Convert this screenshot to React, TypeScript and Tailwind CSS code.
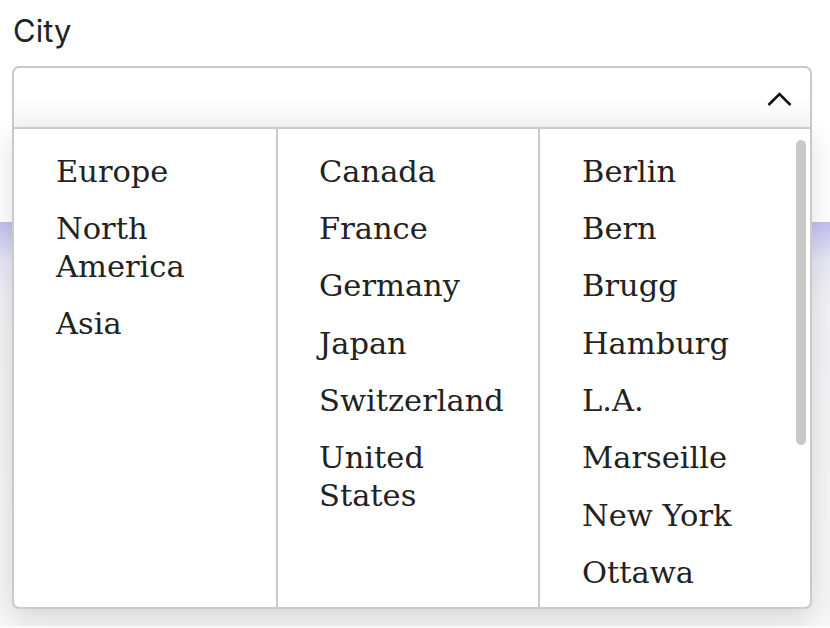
import React from "react";

const col1 = ["Europe", "North America", "Asia"];
const col2 = ["Canada", "France", "Germany", "Japan", "Switzerland", "United States"];
const col3 = ["Berlin", "Bern", "Brugg", "Hamburg", "L.A.", "Marseille", "New York", "Ottawa"];

function Column({ items, className, pad }: { items: string[]; className: string; pad: string }) {
  return (
    <div className={className}>
      <ul className={"flex flex-col gap-[19.4px] pt-[23.5px] pr-[16px] " + pad}>
        {items.map((it) => (
          <li key={it} className="text-[30.5px] leading-[38px] text-[#222]">
            {it}
          </li>
        ))}
      </ul>
    </div>
  );
}

export default function App() {
  return (
    <div className="relative w-[830px] h-[628px] overflow-hidden bg-white">
      <div
        className="pl-[13px] pt-[12px] text-[31px] leading-[38px] text-[#222]"
        style={{ fontFamily: "Inter, 'Noto Sans', sans-serif" }}
      >
        City
      </div>
      <div className="relative z-10 ml-[12px] mt-[16px] w-[800px]">
        <div className="h-[61px] border-2 border-b-0 border-[#cacaca] rounded-t-[7px] bg-gradient-to-b from-white via-white to-[#f6f6f6] flex items-center justify-end pr-[18px] pt-[4px]">
          <svg width="25" height="15" viewBox="0 0 25 15" fill="none">
            <path d="M1.5 13 L12.5 2 L23.5 13" stroke="#111" strokeWidth="2.6" strokeLinecap="butt" strokeLinejoin="miter" />
          </svg>
        </div>
        <div
          className="absolute left-0 top-[61px] w-[800px] h-[482px] border-2 border-[#cacaca] rounded-b-[7px] bg-white flex shadow-[0_10px_28px_rgba(0,0,0,0.13)]"
          style={{ fontFamily: "'DejaVu Serif', serif" }}
        >
          <Column items={col1} pad="pl-[42px]" className="w-[264px] border-r-2 border-[#cacaca]" />
          <Column items={col2} pad="pl-[41px]" className="w-[262px] border-r-2 border-[#cacaca]" />
          <div className="relative flex-1">
            <Column items={col3} pad="pl-[42px]" className="" />
            <div className="absolute right-[4px] top-[11px] w-[10px] h-[305px] rounded-full bg-[#c9c9c9]" />
          </div>
        </div>
      </div>
      <div className="mt-[95px] h-[404px] bg-[linear-gradient(to_bottom,#c3bef1_0px,#e9e8f6_40px,#f2f2f4_80px,#f7f7f7_100%)]" />
    </div>
  );
}
